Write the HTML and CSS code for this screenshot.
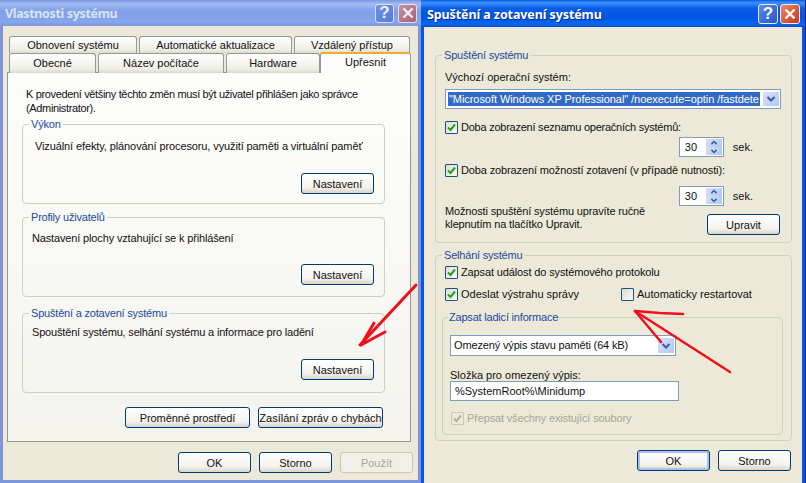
FILE: index.html
```html
<!DOCTYPE html>
<html lang="cs">
<head>
<meta charset="utf-8">
<title>Vlastnosti systému</title>
<link rel="stylesheet" href="styles.css">
</head>
<body>
<div class="desktop">
  <section class="window window-back">
    <header class="titlebar titlebar-off">
      <h1 class="title">Vlastnosti systému</h1>
      <span class="cap cap-help">?</span>
      <span class="cap cap-close"><svg viewBox="0 0 12 12" class="x"><path d="M1.5 1.5 10.5 10.5M10.5 1.5 1.5 10.5"/></svg></span>
    </header>
    <div class="body body-back">
      <div class="tabs">
        <div class="tabrow tabrow-top">
          <span class="tab w128">Obnovení systému</span>
          <span class="tab w153">Automatické aktualizace</span>
          <span class="tab w116">Vzdálený přístup</span>
        </div>
        <div class="tabrow">
          <span class="tab w87">Obecné</span>
          <span class="tab w126">Název počítače</span>
          <span class="tab w94">Hardware</span>
          <span class="tab tab-active">Upřesnit</span>
        </div>
      </div>
      <div class="panel">
        <p class="intro">K provedení většiny těchto změn musí být uživatel přihlášen jako správce (Administrator).</p>
        <fieldset class="group g1">
          <legend>Výkon</legend>
          <p class="desc shift">Vizuální efekty, plánování procesoru, využití paměti a virtuální paměť</p>
          <div class="act"><button class="btn">Nastavení</button></div>
        </fieldset>
        <fieldset class="group g2">
          <legend>Profily uživatelů</legend>
          <p class="desc">Nastavení plochy vztahující se k přihlášení</p>
          <div class="act"><button class="btn">Nastavení</button></div>
        </fieldset>
        <fieldset class="group g3">
          <legend>Spuštění a zotavení systému</legend>
          <p class="desc">Spouštění systému, selhání systému a informace pro ladění</p>
          <div class="act"><button class="btn">Nastavení</button></div>
        </fieldset>
        <div class="panel-actions">
          <button class="btn btn-wide">Proměnné prostředí</button>
          <button class="btn btn-wide btn-tight">Zasílání zpráv o chybách</button>
        </div>
      </div>
      <div class="footer footer-back">
        <button class="btn">OK</button>
        <button class="btn">Storno</button>
        <button class="btn" disabled>Použít</button>
      </div>
    </div>
  </section>

  <section class="window window-front">
    <header class="titlebar titlebar-on">
      <h1 class="title">Spuštění a zotavení systému</h1>
      <span class="cap cap-help">?</span>
      <span class="cap cap-close"><svg viewBox="0 0 12 12" class="x"><path d="M1.5 1.5 10.5 10.5M10.5 1.5 1.5 10.5"/></svg></span>
    </header>
    <div class="body body-front">
      <fieldset class="group flat boot">
        <legend>Spuštění systému</legend>
        <div class="label">Výchozí operační systém:</div>
        <div class="combo combo-os">
          <span class="combo-value selected">"Microsoft Windows XP Professional" /noexecute=optin /fastdete</span>
          <span class="combo-btn"><svg viewBox="0 0 10 8" class="chev"><path d="M1.500 2 5 5.500 8.500 2"/></svg></span>
        </div>
        <label class="check r1"><span class="box"><svg viewBox="0 0 11 11" class="tick"><path d="M2 5.500 4.500 8 9 2.500"/></svg></span>Doba zobrazení seznamu operačních systémů:</label>
        <div class="spinrow s1">
          <span class="spin"><span class="spin-val">30</span><span class="spin-btns"><span class="spin-btn"><svg viewBox="0 0 10 8" class="chev"><path d="M1.500 5.500 5 2 8.500 5.500"/></svg></span><span class="spin-btn"><svg viewBox="0 0 10 8" class="chev"><path d="M1.500 2.500 5 6 8.500 2.500"/></svg></span></span></span>
          <span>sek.</span>
        </div>
        <label class="check r2"><span class="box"><svg viewBox="0 0 11 11" class="tick"><path d="M2 5.500 4.500 8 9 2.500"/></svg></span>Doba zobrazení možností zotavení (v případě nutnosti):</label>
        <div class="spinrow s2">
          <span class="spin"><span class="spin-val">30</span><span class="spin-btns"><span class="spin-btn"><svg viewBox="0 0 10 8" class="chev"><path d="M1.500 5.500 5 2 8.500 5.500"/></svg></span><span class="spin-btn"><svg viewBox="0 0 10 8" class="chev"><path d="M1.500 2.500 5 6 8.500 2.500"/></svg></span></span></span>
          <span>sek.</span>
        </div>
        <div class="editrow">
          <p class="edit-text">Možnosti spuštění systému upravíte ručně<br>klepnutím na tlačítko Upravit.</p>
          <button class="btn btn-edit">Upravit</button>
        </div>
      </fieldset>
      <fieldset class="group flat fail">
        <legend>Selhání systému</legend>
        <label class="check r3"><span class="box"><svg viewBox="0 0 11 11" class="tick"><path d="M2 5.500 4.500 8 9 2.500"/></svg></span>Zapsat událost do systémového protokolu</label>
        <div class="duo">
          <label class="check duo-left"><span class="box"><svg viewBox="0 0 11 11" class="tick"><path d="M2 5.500 4.500 8 9 2.500"/></svg></span>Odeslat výstrahu správy</label>
          <label class="check"><span class="box"></span>Automaticky restartovat</label>
        </div>
        <fieldset class="group flat debug">
          <legend>Zapsat ladicí informace</legend>
          <div class="combo combo-dump">
            <span class="combo-value">Omezený výpis stavu paměti (64 kB)</span>
            <span class="combo-btn"><svg viewBox="0 0 10 8" class="chev"><path d="M1.500 2 5 5.500 8.500 2"/></svg></span>
          </div>
          <div class="label label-dir">Složka pro omezený výpis:</div>
          <div class="input">%SystemRoot%\Minidump</div>
          <label class="check check-off"><span class="box box-off"><svg viewBox="0 0 11 11" class="tick tick-off"><path d="M2 5.500 4.500 8 9 2.500"/></svg></span>Přepsat všechny existující soubory</label>
        </fieldset>
      </fieldset>
      <div class="footer footer-front">
        <button class="btn btn-default">OK</button>
        <button class="btn">Storno</button>
      </div>
    </div>
  </section>

  <svg class="scribble" viewBox="0 0 806 483" aria-hidden="true">
    <path class="ink-thick" d="M416 285 360 345"/>
    <path class="ink-thick" d="M374 323 361 345 385 332"/>
    <path class="ink" d="M635 311 660 313 683 314"/>
    <path class="ink" d="M635 311 730 372"/>
    <path class="ink" d="M635 311 661 342"/>
  </svg>
</div>
</body>
</html>
```

FILE: styles.css
```css
* { box-sizing: border-box; }
html, body { margin: 0; padding: 0; }
body {
  width: 806px;
  height: 483px;
  overflow: hidden;
  background: #0b1f6b;
  font: 11px/14px "Liberation Sans", Arial, sans-serif;
  color: #111;
}
p { margin: 0; }

.desktop { position: relative; width: 806px; height: 483px; overflow: hidden; }

.window {
  position: absolute;
  top: 0;
  display: flex;
  flex-direction: column;
  height: 483px;
}
.window-back { left: 0; width: 424px; background: #7d95dc; padding: 0 3px 3px; }
.window-front { left: 421px; width: 384px; background: #0655e6; padding: 0 3px; height: 490px; }

.titlebar {
  display: flex;
  align-items: center;
  margin: 0 -3px;
  flex: none;
}
.titlebar-off {
  height: 26px;
  padding: 0 7px 0 5px;
  background: linear-gradient(180deg, #7895e2 0%, #a0baf2 14%, #7f9fe8 45%, #88a6ec 85%, #7b96dc 100%);
  color: #d9e5f8;
}
.titlebar-on {
  height: 27px;
  padding: 0 5px 0 6px;
  background: linear-gradient(180deg, #0a58e0 0%, #3b92ff 10%, #0a5de6 30%, #0055e5 65%, #0a66f2 90%, #0049c8 100%);
  color: #fff;
}
.title {
  flex: 1;
  margin: 0;
  padding-top: 2px;
  font: bold 12.5px/16px "Noto Sans", sans-serif;
}
.titlebar-off .title { letter-spacing: -.35px; }
.titlebar-on .title { letter-spacing: -.1px; text-shadow: 1px 1px 0 #0a2f8c; }

.cap {
  flex: none;
  display: flex;
  align-items: center;
  justify-content: center;
  width: 20px;
  height: 20px;
  border: 1px solid #e6edfb;
  border-radius: 3px;
  font: bold 17px/18px "Liberation Sans", sans-serif;
  color: #fff;
}
.cap-close { margin-left: 2px; }
.titlebar-off .cap { opacity: .85; width: 19px; height: 19px; }
.titlebar-off .cap-help { background: linear-gradient(135deg, #6d8fe4, #4f72cf); }
.titlebar-off .cap-close { background: linear-gradient(135deg, #cf8f93, #b5525f); margin-left: 4px; }
.titlebar-on .cap-help { background: linear-gradient(135deg, #5d8bf5, #2353c8); }
.titlebar-on .cap-close { background: linear-gradient(135deg, #ea8a6a, #cf3310); }
.x { width: 12px; height: 12px; fill: none; stroke: #fff; stroke-width: 2.4; }

.body { flex: 1; min-width: 0; background: #ece9d8; }
.body-back { padding: 10px 7px 0 4px; margin-right: 3px; }
.body-front { padding: 21px 10px 0 11px; }

.tabs { height: 36px; padding-left: 2px; }
.tabrow { display: flex; height: 20px; }
.tabrow-top { height: 17px; }
.tab {
  display: block;
  flex: none;
  height: 20px;
  margin-right: 2px;
  border: 1px solid #919b9c;
  border-bottom: 0;
  border-radius: 3px 3px 0 0;
  background: linear-gradient(180deg, #fff, #eeeee5 80%, #dcdacd);
  text-align: center;
  line-height: 19px;
}
.tabrow-top .tab { height: 17px; line-height: 16px; }
.w128 { width: 128px; }
.w153 { width: 153px; }
.w116 { width: 116px; }
.w87 { width: 87px; }
.w126 { width: 126px; }
.w94 { width: 94px; margin-right: 0; }
.tab-active {
  width: 91px;
  height: 21px;
  margin: -1px 0 0 0;
  border-top: 2px solid #f2a93a;
  background: #fcfcfa;
  position: relative;
  z-index: 1;
  line-height: 17px;
}

.panel {
  height: 370px;
  margin-left: 0;
  padding: 14px 25px 0 14px;
  border: 1px solid #919b9c;
  background: linear-gradient(180deg, #fdfdfb, #f4f3ee);
}
.intro { margin: 0 0 2px 4px; width: 356px; letter-spacing: -.35px; }

.group {
  display: block;
  margin: 0;
  padding: 0 10px 0 9px;
  min-width: 0;
  border: 1px solid #d0d0bf;
  border-radius: 4px;
}
.group legend {
  margin-left: -3px;
  padding: 0 2px;
  line-height: 14px;
  color: #1b4aa0;
  letter-spacing: -.2px;
}
.group + .group { margin-top: 6px; }
.group.g3 { margin-top: 9px; }
.g1, .g2, .g3 { height: 87px; }
.desc { padding-top: 8px; letter-spacing: -.15px; }
.shift { margin-left: 3px; letter-spacing: -.11px; }
.g2 .desc { padding-top: 7px; }
.g3 .desc { padding-top: 5px; letter-spacing: -.175px; }
.act { margin-top: 20px; display: flex; justify-content: flex-end; }
.g2 .act { margin-top: 19px; }

.panel-actions { display: flex; justify-content: flex-end; gap: 8px; margin-top: 14px; padding-right: 2px; }

.btn {
  display: block;
  width: 73px;
  height: 21px;
  padding: 0;
  border: 1px solid #003c74;
  border-radius: 3px;
  background: linear-gradient(180deg, #fff, #f4f3ee 70%, #d9d5c8);
  font: inherit;
  color: #111;
  text-align: center;
}
.btn:disabled { border-color: #c9c7ba; background: #f2f0e6; color: #a9a698; }
.btn-wide { width: 125px; letter-spacing: -.1px; }
.btn-tight { letter-spacing: 0; white-space: nowrap; }
.btn-default { box-shadow: inset 0 0 0 2px #a8c2ee; }

.footer { display: flex; justify-content: flex-end; gap: 8px; }
.footer-back { margin: 10px -2px 0 0; }
.footer-front { margin: 9px 1px 0 0; }

.flat { background: transparent; }
.boot { height: 195px; }
.body-front .fail { height: 193px; margin-top: 5px; }
.label { line-height: 14px; padding-top: 8px; box-sizing: content-box; }
.combo {
  display: flex;
  align-items: stretch;
  background: #fff;
  border: 1px solid #7f9db9;
}
.combo-os { margin-top: 5px; height: 20px; padding: 2px 1px 2px 2px; }
.combo-value { flex: 1; min-width: 0; white-space: nowrap; line-height: 15px; letter-spacing: -.15px; }
.selected { background: #316ac5; color: #fff; padding-left: 1px; letter-spacing: -.06px; }
.combo-btn {
  flex: none;
  display: flex;
  align-items: center;
  justify-content: center;
  width: 16px;
  margin-left: 3px;
  border-radius: 1px;
  background: linear-gradient(135deg, #d6e2fb, #b2c7f4);
}
.chev { width: 10px; height: 8px; fill: none; stroke: #3d5a96; stroke-width: 2; }

.check { display: flex; align-items: center; height: 14px; white-space: nowrap; }
.box {
  flex: none;
  display: flex;
  align-items: center;
  justify-content: center;
  width: 13px;
  height: 13px;
  margin-right: 3px;
  border: 1px solid #1c5180;
  border-radius: 1px;
  background: linear-gradient(135deg, #dedcd0, #fafaf6);
}
.tick { width: 11px; height: 11px; fill: none; stroke: #21a121; stroke-width: 2; }
.r1 { margin-top: 11px; letter-spacing: -.24px; }
.r2 { margin-top: 6px; letter-spacing: -.13px; }
.r3 { margin-top: 3px; letter-spacing: -.13px; }

.spinrow { display: flex; align-items: center; justify-content: flex-end; gap: 9px; height: 20px; padding-right: 28px; }
.s1 { margin-top: 3px; }
.s2 { margin-top: 9px; }
.spin {
  display: flex;
  align-items: stretch;
  width: 45px;
  height: 20px;
  padding: 1px;
  background: #fff;
  border: 1px solid #7f9db9;
}
.spin-val { flex: 1; padding-left: 4px; line-height: 16px; }
.spin-btns { display: flex; flex-direction: column; width: 16px; }
.spin-btn {
  flex: 1;
  display: flex;
  align-items: center;
  justify-content: center;
  background: linear-gradient(135deg, #d6e2fb, #b2c7f4);
}
.spin-btn .chev { width: 8px; height: 6px; }

.editrow { display: flex; justify-content: space-between; margin-top: -1px; }
.edit-text { line-height: 13px; letter-spacing: -.15px; }
.btn-edit { margin: 9px 1px 0 0; }

.duo { display: flex; margin-top: 8px; }
.duo-left { width: 176px; }
.debug { height: 125px; margin: 9px -2px 0 -3px; padding: 0 7px; }
.debug legend { margin-left: -2px; padding: 0 1px; }
.combo-dump { width: 226px; height: 21px; margin-top: 11px; padding: 2px 1px 2px 3px; }
.label-dir { padding-top: 12px; }
.input {
  width: 229px;
  height: 20px;
  margin-top: -1px;
  padding-left: 4px;
  border: 1px solid #7f9db9;
  background: #fff;
  line-height: 18px;
}
.check-off { margin: 10px 0 0 1px; color: #a9a698; letter-spacing: -.15px; }
.box-off { border-color: #c9c7ba; background: #ece9d8; margin-right: 3px; }
.tick-off { stroke: #b5b3a6; }

.scribble {
  position: absolute;
  left: 0;
  top: 0;
  width: 806px;
  height: 483px;
  pointer-events: none;
}
.ink { fill: none; stroke: #f0101c; stroke-width: 2.5; stroke-linecap: round; stroke-linejoin: round; }
.ink-thick { fill: none; stroke: #f0101c; stroke-width: 3; stroke-linecap: round; stroke-linejoin: round; }
```
